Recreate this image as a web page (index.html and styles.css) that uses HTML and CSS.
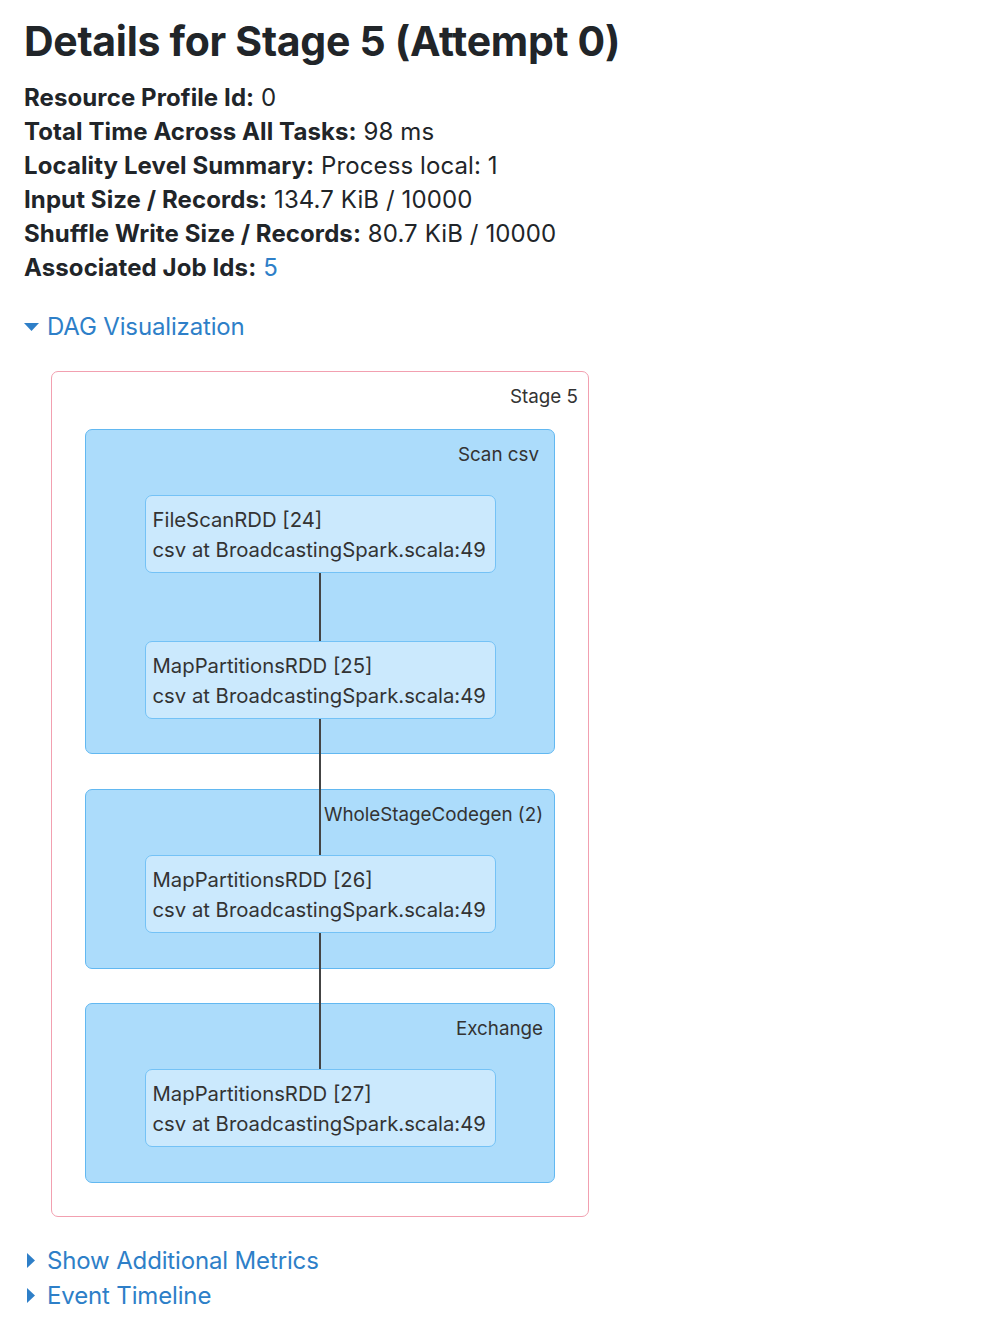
FILE: index.html
```html
<!DOCTYPE html>
<html lang="en">
<head>
<meta charset="utf-8">
<title>Details for Stage 5 (Attempt 0)</title>
<link rel="stylesheet" href="styles.css">
</head>
<body>
<main class="page">
  <h1 class="title">Details for Stage 5 (Attempt 0)</h1>
  <ul class="summary">
    <li><strong>Resource Profile Id:</strong> 0</li>
    <li><strong>Total Time Across All Tasks:</strong> 98 ms</li>
    <li><strong>Locality Level Summary:</strong> Process local: 1</li>
    <li><strong>Input Size / Records:</strong> 134.7 KiB / 10000</li>
    <li><strong>Shuffle Write Size / Records:</strong> 80.7 KiB / 10000</li>
    <li><strong>Associated Job Ids:</strong> <a class="link" href="#">5</a></li>
  </ul>

  <a class="toggle toggle-open" href="#">
    <span class="toggle-icon"><svg width="15" height="8" viewBox="0 0 15 8"><path d="M0 0H15L7.5 8Z" fill="currentColor"/></svg></span>
    <span>DAG Visualization</span>
  </a>

  <div class="stage">
    <div class="stage-label">Stage 5</div>
    <div class="edge"></div>

    <div class="cluster cluster-first">
      <div class="cluster-label cluster-label-wide">Scan csv</div>
      <div class="node"><div>FileScanRDD [24]</div><div>csv at BroadcastingSpark.scala:49</div></div>
      <div class="node node-next"><div>MapPartitionsRDD [25]</div><div>csv at BroadcastingSpark.scala:49</div></div>
    </div>

    <div class="cluster cluster-second">
      <div class="cluster-label">WholeStageCodegen (2)</div>
      <div class="node"><div>MapPartitionsRDD [26]</div><div>csv at BroadcastingSpark.scala:49</div></div>
    </div>

    <div class="cluster cluster-third">
      <div class="cluster-label">Exchange</div>
      <div class="node"><div>MapPartitionsRDD [27]</div><div>csv at BroadcastingSpark.scala:49</div></div>
    </div>
  </div>

  <div class="toggles">
    <a class="toggle" href="#">
      <span class="toggle-icon toggle-icon-right"><svg width="8" height="15" viewBox="0 0 8 15"><path d="M0 0V15L8 7.5Z" fill="currentColor"/></svg></span>
      <span>Show Additional Metrics</span>
    </a>
    <a class="toggle" href="#">
      <span class="toggle-icon toggle-icon-right"><svg width="8" height="15" viewBox="0 0 8 15"><path d="M0 0V15L8 7.5Z" fill="currentColor"/></svg></span>
      <span>Event Timeline</span>
    </a>
  </div>
</main>
</body>
</html>
```

FILE: styles.css
```css
* { box-sizing: border-box; }

html, body {
  margin: 0;
  padding: 0;
  background: #ffffff;
}

body {
  font-family: "Inter", "Noto Sans", "Liberation Sans", sans-serif;
  color: #212529;
}

.page {
  padding: 0 24px;
}

.title {
  margin: 17px 0 0;
  font-size: 41px;
  line-height: 48px;
  font-weight: 700;
  letter-spacing: -0.3px;
}

.summary {
  list-style: none;
  margin: 16px 0 0;
  padding: 0;
  font-size: 24px;
  line-height: 34px;
  letter-spacing: 0.1px;
}

.summary strong {
  font-weight: 700;
}

.link {
  color: #2e7fc8;
  text-decoration: none;
}

.toggle {
  display: flex;
  align-items: center;
  color: #2e7fc8;
  text-decoration: none;
  font-size: 24px;
  line-height: 34px;
  letter-spacing: -0.15px;
}

.toggle-open {
  margin-top: 25px;
}

.toggle-icon {
  display: inline-flex;
  width: 23px;
  align-items: center;
}

.toggle-icon svg {
  display: block;
}

.toggle-icon-right {
  padding-left: 3px;
}

.stage {
  position: relative;
  width: 538px;
  margin: 27px 0 0 27px;
  padding: 11px 0 33px;
  border: 1px solid #f2a0b0;
  border-radius: 7px;
  background: #ffffff;
  color: #333333;
}

.stage-label {
  text-align: right;
  font-size: 18.8px;
  line-height: 28px;
  padding-right: 10px;
  margin-bottom: 18px;
}

.edge {
  position: absolute;
  left: 267px;
  top: 201px;
  width: 2px;
  height: 497px;
  background: #444444;
  z-index: 1;
}

.cluster {
  margin: 0 33px;
  padding: 11px 0 35px;
  border: 1px solid #62b8f1;
  border-radius: 7px;
  background: #acdcfb;
}

.cluster-first {
  padding-bottom: 34px;
}

.cluster-second {
  margin-top: 35px;
}

.cluster-third {
  margin-top: 34px;
}

.cluster-label {
  text-align: right;
  font-size: 18.8px;
  line-height: 28px;
  padding-right: 11px;
  margin-bottom: 26px;
  position: relative;
  z-index: 2;
}

.cluster-label-wide {
  padding-right: 15px;
}

.node {
  position: relative;
  z-index: 2;
  width: 351px;
  margin: 0 auto;
  padding: 9px 7px 7px;
  border: 1px solid #74c2f6;
  border-radius: 7px;
  background: #cbe9fd;
  font-size: 20.3px;
  line-height: 30px;
  white-space: nowrap;
}

.node-next {
  margin-top: 68px;
}

.toggles {
  margin-top: 26px;
}

.toggles .toggle {
  line-height: 35px;
}
```
